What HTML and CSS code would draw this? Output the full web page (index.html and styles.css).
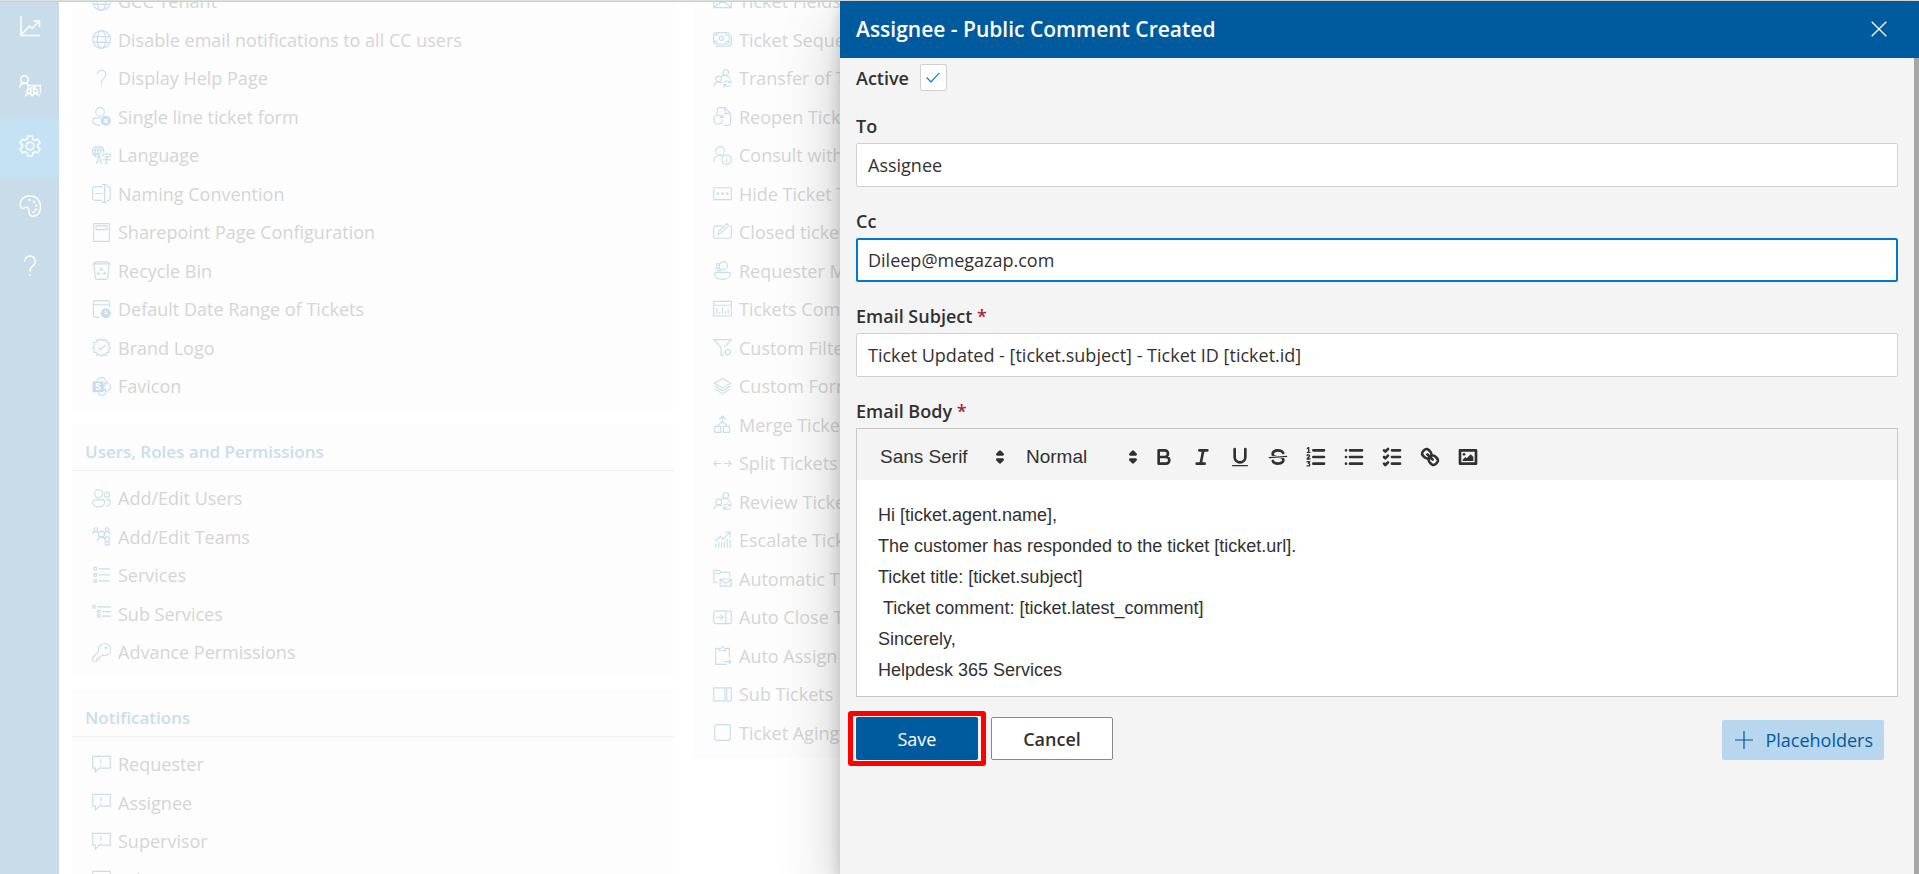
FILE: index.html
```html
<!DOCTYPE html>
<html lang="en">
<head>
<meta charset="utf-8">
<title>Helpdesk settings</title>
<link rel="stylesheet" href="styles.css">
</head>
<body>
<svg class="sprite" aria-hidden="true">
  <symbol id="globe" viewBox="0 0 20 20"><circle cx="10" cy="10" r="9.3"/><ellipse cx="10" cy="10" rx="4.4" ry="9.3"/><path d="M1.5 7h17M1.5 13h17"/></symbol>
  <symbol id="help" viewBox="0 0 20 20"><path d="M5.5 5.5a4.5 4.5 0 1 1 7.4 3.6C11 10.600 10 11.500 10 14.500M10 17v1.700"/></symbol>
  <symbol id="user-x" viewBox="0 0 20 20"><circle cx="8.500" cy="5.200" r="4.500"/><path d="M9 11.500H3.200C1.700 11.500.7 12.500.7 14c0 3.500 3.300 5.300 8 5.300"/><circle class="solid" cx="14.500" cy="14.500" r="5.300"/><path class="cut" d="m12.500 12.500 4 4m0-4-4 4"/></symbol>
  <symbol id="language" viewBox="0 0 20 20"><path d="M5 11.500A6 6 0 1 1 12.300 7M1 4.500h11M1 8h8M6.500 12V.5M4.500 11C3 8 3 4 4.800 1M8 1c1 1.500 1.500 3 1.500 6M4.500 19l3-8.500 3 8.500M5.500 16h4M15 7v1.500M11.500 11V8.700h8V11M13 11.500h4.500L15.500 13v5.500h-2M11 14.500h9"/></symbol>
  <symbol id="rename" viewBox="0 0 20 20"><path d="M11 2.700H3.500A2.800 2.800 0 0 0 .7 5.500v9a2.800 2.800 0 0 0 2.800 2.800H11M15.500 2.700h1a2.800 2.800 0 0 1 2.800 2.800v9a2.800 2.800 0 0 1-2.800 2.800h-1M10.500.7h5.500M10.500 19.300H16M13.300.7v18.600M3.500 10h7.500"/></symbol>
  <symbol id="page" viewBox="0 0 20 20"><path d="M1.700.7h16.600v18.600H1.700zM4.300 3h11.400v4H4.300z"/></symbol>
  <symbol id="bin" viewBox="0 0 20 20"><path d="M3.500.9h13L18.500 3H1.500zM2 3l1.500 14.500a2 2 0 0 0 2 1.800h9a2 2 0 0 0 2-1.800L18 3M8 10.500l2-3 2 3M13 11l1.200 2.500H11M6.800 11.500 5.800 13.500H9"/></symbol>
  <symbol id="date" viewBox="0 0 20 20"><path d="M7.500 18.300H4a2.500 2.500 0 0 1-2.500-2.500V3.200A2.500 2.500 0 0 1 4 .7h12a2.500 2.500 0 0 1 2.500 2.500V7.500M1.500 5h17"/><circle class="solid" cx="14.500" cy="14" r="5.300"/><path class="cut" d="M14.300 11v3.300h2.500"/></symbol>
  <symbol id="badge" viewBox="0 0 20 20"><path d="m10 .7 1.900 2 2.700-1 .7 2.700 2.900.6-.9 2.800 2 2.200-2 2.200.9 2.800-2.900.6-.7 2.700-2.700-1-1.900 2-1.900-2-2.700 1-.7-2.700-2.900-.6.9-2.800-2-2.200 2-2.200-.9-2.800 2.900-.6.7-2.700 2.700 1zM6.500 10l2.500 2.500 5-5"/></symbol>
  <symbol id="share" viewBox="0 0 20 20"><circle cx="10" cy="5.500" r="5"/><circle cx="15.300" cy="10.500" r="4.200"/><circle cx="10.700" cy="15.500" r="4"/><path class="solid" d="M.5 4.500h11.500v11.500H.5z"/><path class="cut" d="M8.500 7.800C7 6.800 4.300 7 4.300 8.500s4.200 1.200 4.200 3-2.700 2-4.400.8"/></symbol>
  <symbol id="users" viewBox="0 0 20 20"><circle cx="7" cy="5" r="4.200"/><circle cx="15.700" cy="6" r="2.700"/><path d="M2.500 11.500h9c1 0 1.800.8 1.800 1.800 0 3.300-2.500 5.500-6.300 5.500S.7 16.600.7 13.300c0-1 .8-1.800 1.800-1.800zM15 11.500h2.700c1 0 1.600.6 1.600 1.600 0 2.700-1.800 4.700-4.800 4.700"/></symbol>
  <symbol id="teams" viewBox="0 0 20 20"><circle cx="4" cy="2.800" r="2"/><circle cx="16" cy="2.800" r="2"/><circle cx="10" cy="7.500" r="3.200"/><circle cx="16" cy="13" r="2.600"/><path d="M.7 7.500C1 5.500 2.300 4.800 4 4.800s2.500.7 3 1.500M19.300 7.500c-.3-2-1.600-2.700-3.300-2.700s-2.500.7-3 1.500M5.500 15c.3-3 2-4.300 4.500-4.300 1.500 0 2.600.5 3.400 1.300M14 15v4.300l2-1.300 2 1.300V15"/></symbol>
  <symbol id="list" viewBox="0 0 20 20"><path d="M7 3h12M7 9.300h12M7 15.600h12M2 1.500h2.600v2.600H2zM2 8h2.600v2.600H2zM2 14.300h2.600v2.600H2z"/></symbol>
  <symbol id="sublist" viewBox="0 0 20 20"><path d="M5.500 3H20M10.500 8H20M10.500 12.700H20M.8 1.700h2.500v2.500H.8zM5.800 6.700h2.500v2.500H5.800zM5.800 11.500h2.500v2.500H5.800z"/></symbol>
  <symbol id="key" viewBox="0 0 20 20"><path d="M13 .8a6.200 6.200 0 0 0-6 8L.8 15v4.200H5V17h2.500v-2.500H9.500l1.500-2A6.200 6.200 0 1 0 13 .8z"/><circle cx="14.800" cy="5.200" r=".8"/></symbol>
  <symbol id="alert" viewBox="0 0 20 20"><path d="M.7 1.500h18.600v12.300H7.500L3.500 18v-4.200H.7zM9.300 4.200v5M9.300 10.800v1.200"/></symbol>
  <symbol id="fields" viewBox="0 0 20 20"><path d="M.7 3v13.500h18.600V3zM1 16 7.500 11h5l6.500 5"/></symbol>
  <symbol id="notes" viewBox="0 0 20 20"><rect x=".7" y="2.700" width="16.300" height="12" rx="2"/><circle cx="8.800" cy="8.700" r="2.200"/><path d="M3 17h13a3.300 3.300 0 0 0 3.300-3.300V5.500M4 3v2.500H1M13.700 3v2.500h3M4 14.500V12H1M13.700 14.500V12h3"/></symbol>
  <symbol id="transfer" viewBox="0 0 20 20"><circle cx="13.500" cy="3.800" r="3"/><circle cx="6" cy="10.500" r="3"/><path d="M8.500 8c2.500-2 7.500-2 9.500 2.500M1.300 18c.3-3 2-4.500 4.700-4.500 1.700 0 2.800.5 3.700 1.700M11.500 14.500c1.500-2.500 5-2.500 6.500-.3M18.800 11.500v3h-3M18.800 16.500c-1.500 2.500-5 2.500-6.500.3M11.500 19.500v-3h3"/></symbol>
  <symbol id="reopen" viewBox="0 0 20 20"><path d="M4.500 8V2.700a2 2 0 0 1 2-2h6L18.500 7v10.300a2 2 0 0 1-2 2H12M12.500.7V7h6M9.500 10.500A4.800 4.800 0 1 0 10.300 14M10.300 8v3.200H7"/></symbol>
  <symbol id="consult" viewBox="0 0 20 20"><circle cx="7.500" cy="5.200" r="4.500"/><path d="M.7 16.500c0-4.500 3-6.800 6.500-6.800 1.300 0 2 .1 3 .7"/><circle cx="14.300" cy="14.300" r="5"/><path d="M14.300 13.500v3.500M14.300 11.300v1"/></symbol>
  <symbol id="dots" viewBox="0 0 20 20"><path d="M.7 4h18.600v12.500H.7z"/><circle class="solid" cx="5" cy="10.200" r="1.400"/><circle class="solid" cx="10" cy="10.200" r="1.400"/><circle class="solid" cx="15" cy="10.200" r="1.400"/></symbol>
  <symbol id="edit" viewBox="0 0 20 20"><path d="M10 3.300H2.200C1.300 3.300.7 4 .7 4.800v9.700c0 .8.600 1.500 1.500 1.500h15.600c.9 0 1.500-.7 1.500-1.500V4.800c0-.8-.6-1.500-1.500-1.500M5 12l1-3 8.500-8.300 2 2L8 11z"/></symbol>
  <symbol id="requester" viewBox="0 0 20 20"><circle cx="11" cy="5" r="4.300"/><path d="M3.500 3h3v5h-3zM4.500 10.200h4M3.300 12h13.400c1 0 1.600.7 1.600 1.600 0 3.500-3.500 5.700-8.300 5.700s-8.300-2.200-8.300-5.700c0-.9.6-1.600 1.600-1.600z"/></symbol>
  <symbol id="chart" viewBox="0 0 20 20"><path d="M.7 1.500h18.600v15.300H.7zM.7 5.500h18.600M4 14.500V9M7 14.500v-2M10 14.500V8M13 14.500v-3M16 14.500V9.500"/></symbol>
  <symbol id="filter" viewBox="0 0 20 20"><path d="M8.500 18.500V10L.8 1.700h18.400L12 9.500M8.500 18.500h3"/><circle cx="15.500" cy="15" r="2.600"/><path d="M15.500 11v1.200M15.500 17.800V19M11.500 15h1.200M18.300 15h1.200M12.700 12.200l.9.900M17.400 16.900l.9.900M12.700 17.800l.9-.9M17.400 13.100l.9-.9"/></symbol>
  <symbol id="layers" viewBox="0 0 20 20"><path d="m10 1.500 8.500 5L10 11.500l-8.500-5zM1.500 9.500l8.500 5 8.500-5M1.500 12.500l8.500 5 8.500-5"/></symbol>
  <symbol id="merge" viewBox="0 0 20 20"><path d="M1.800 12h6.400v6.300H1.800zM11 12h6.400v6.300H11zM10 7V1M6.500 4.500 10 1l3.500 3.500M5 12c0-3 5-2.500 5-6 0 3.500 5 3 5 6"/></symbol>
  <symbol id="split" viewBox="0 0 20 20"><path d="M1 10h7.500M4 7l-3 3 3 3M11.500 10H19M16 7l3 3-3 3"/></symbol>
  <symbol id="escalate" viewBox="0 0 20 20"><path d="m2 10.500 6-5 2.500 3L18 1M12.500 1H18v6M3 17.500v-4M6 17.500v-6M9 17.500V12M12 17.500V11M15 17.500V9M18 17.500v-8"/></symbol>
  <symbol id="mail" viewBox="0 0 20 20"><path d="M5 14H.8V1.500h6L8.500 3.500h9V8M.8 5h6L8.500 3.500M7.500 10.500h11.800V18H7.500zM7.500 11l6 4 6-4"/></symbol>
  <symbol id="close-in" viewBox="0 0 20 20"><rect x=".7" y="3" width="18.600" height="13.500" rx="2.500"/><path d="M13.500 3v13.500M3 9.700h7.500M8 7l2.700 2.700L8 12.500"/></symbol>
  <symbol id="clipboard" viewBox="0 0 20 20"><path d="M6.500 2.500H2.800v16.800H14M17.200 12V2.500h-3.700M6.500 5h7V3L11.500 2.300a1.500 1.500 0 0 0-3 0L6.500 3zM11.500 16.500h7M16.500 14l2.500 2.500-2.500 2.500"/></symbol>
  <symbol id="columns" viewBox="0 0 20 20"><path d="M.7 3h11.800v13.700H.7zM14.500 3h4.800v13.700h-4.800z"/></symbol>
  <symbol id="square" viewBox="0 0 20 20"><rect x="1.700" y="1.700" width="16.600" height="16.600" rx="2.500"/></symbol>
</svg>

<nav class="rail" aria-label="Main">
  <a class="rail-item" href="#" aria-label="Reports"><svg viewBox="0 0 22 22"><path d="M2 1v19.500h19M3 19l7.500-8 2.500 2.500L20 6.500M14.500 6H20.500v6"/></svg></a>
  <a class="rail-item" href="#" aria-label="Teams"><svg viewBox="0 0 22 22"><circle cx="5.500" cy="4.500" r="3.800"/><path d="M.7 12.500C1 9.500 2.800 8.300 5.500 8.300c2 0 3.500.9 4.500 2.200M9 10.500h12.500V18.500M11 13h4.500v-3M16 9.500V12.500M9 10.500v4"/><circle cx="10" cy="16" r="2"/><circle cx="16.500" cy="16" r="2"/><path d="M6.500 21.500c.3-2 1.500-3 3.500-3s3 1 3.300 3c.3-2 1.200-3 3.200-3s3.200 1 3.500 3"/></svg></a>
  <a class="rail-item is-active" href="#" aria-label="Settings" aria-current="page"><svg viewBox="0 0 22 22"><path d="M8.800 1h4.400l.7 3.200 1.800 1 3.100-1 2.200 3.800-2.400 2.200v1.600l2.400 2.200-2.200 3.800-3.100-1-1.800 1-.7 3.200H8.800l-.7-3.200-1.800-1-3.100 1L1 14l2.400-2.200v-1.600L1 8l2.200-3.800 3.100 1 1.800-1z"/><circle cx="11" cy="11" r="3.800"/></svg></a>
  <a class="rail-item" href="#" aria-label="Theme"><svg viewBox="0 0 22 22"><path d="M2 12.500C-.5 8 3 1 10.500 1S21.500 6 21.500 12s-4 9.300-7.500 9.300c-3 0-4-2-4-4.500 0-3-.5-4.500-2.500-4.500-2 0-3.500 2.500-5.500.2z"/><circle class="dot" cx="10.500" cy="5" r="1.200"/><circle class="dot" cx="15" cy="6.800" r="1.200"/><circle class="dot" cx="17.200" cy="10.500" r="1.200"/><circle class="dot" cx="17" cy="14.500" r="1.200"/><circle class="dot" cx="14.500" cy="17" r="1.200"/></svg></a>
  <a class="rail-item" href="#" aria-label="Help"><svg viewBox="0 0 22 22"><path d="M5.700 6.500a5.300 5.300 0 1 1 8.600 4C12 12.300 11 13.300 11 16.500M11 19v2"/></svg></a>
</nav>

<main class="settings">
  <div class="column">
    <section class="card">
      <ul class="links">
        <li><a href="#"><svg><use href="#globe"/></svg>GCC Tenant</a></li>
        <li><a href="#"><svg><use href="#globe"/></svg>Disable email notifications to all CC users</a></li>
        <li><a href="#"><svg><use href="#help"/></svg>Display Help Page</a></li>
        <li><a href="#"><svg><use href="#user-x"/></svg>Single line ticket form</a></li>
        <li><a href="#"><svg><use href="#language"/></svg>Language</a></li>
        <li><a href="#"><svg><use href="#rename"/></svg>Naming Convention</a></li>
        <li><a href="#"><svg><use href="#page"/></svg>Sharepoint Page Configuration</a></li>
        <li><a href="#"><svg><use href="#bin"/></svg>Recycle Bin</a></li>
        <li><a href="#"><svg><use href="#date"/></svg>Default Date Range of Tickets</a></li>
        <li><a href="#"><svg><use href="#badge"/></svg>Brand Logo</a></li>
        <li><a href="#"><svg><use href="#share"/></svg>Favicon</a></li>
      </ul>
    </section>
    <section class="card">
      <h2 class="card-title">Users, Roles and Permissions</h2>
      <ul class="links">
        <li><a href="#"><svg><use href="#users"/></svg>Add/Edit Users</a></li>
        <li><a href="#"><svg><use href="#teams"/></svg>Add/Edit Teams</a></li>
        <li><a href="#"><svg><use href="#list"/></svg>Services</a></li>
        <li><a href="#"><svg><use href="#sublist"/></svg>Sub Services</a></li>
        <li><a href="#"><svg><use href="#key"/></svg>Advance Permissions</a></li>
      </ul>
    </section>
    <section class="card">
      <h2 class="card-title">Notifications</h2>
      <ul class="links">
        <li><a href="#"><svg><use href="#alert"/></svg>Requester</a></li>
        <li><a href="#"><svg><use href="#alert"/></svg>Assignee</a></li>
        <li><a href="#"><svg><use href="#alert"/></svg>Supervisor</a></li>
        <li><a href="#"><svg><use href="#alert"/></svg>Admin</a></li>
      </ul>
    </section>
  </div>
  <div class="column">
    <section class="card">
      <ul class="links">
        <li><a href="#"><svg><use href="#fields"/></svg>Ticket Fields</a></li>
        <li><a href="#"><svg><use href="#notes"/></svg>Ticket Sequence</a></li>
        <li><a href="#"><svg><use href="#transfer"/></svg>Transfer of Tickets</a></li>
        <li><a href="#"><svg><use href="#reopen"/></svg>Reopen Tickets</a></li>
        <li><a href="#"><svg><use href="#consult"/></svg>Consult with</a></li>
        <li><a href="#"><svg><use href="#dots"/></svg>Hide Ticket Type</a></li>
        <li><a href="#"><svg><use href="#edit"/></svg>Closed tickets</a></li>
        <li><a href="#"><svg><use href="#requester"/></svg>Requester Mode</a></li>
        <li><a href="#"><svg><use href="#chart"/></svg>Tickets Comments</a></li>
        <li><a href="#"><svg><use href="#filter"/></svg>Custom Filters</a></li>
        <li><a href="#"><svg><use href="#layers"/></svg>Custom Forms</a></li>
        <li><a href="#"><svg><use href="#merge"/></svg>Merge Tickets</a></li>
        <li><a href="#"><svg><use href="#split"/></svg>Split Tickets</a></li>
        <li><a href="#"><svg><use href="#transfer"/></svg>Review Tickets</a></li>
        <li><a href="#"><svg><use href="#escalate"/></svg>Escalate Tickets</a></li>
        <li><a href="#"><svg><use href="#mail"/></svg>Automatic Tickets</a></li>
        <li><a href="#"><svg><use href="#close-in"/></svg>Auto Close Tickets</a></li>
        <li><a href="#"><svg><use href="#clipboard"/></svg>Auto Assign</a></li>
        <li><a href="#"><svg><use href="#columns"/></svg>Sub Tickets</a></li>
        <li><a href="#"><svg><use href="#square"/></svg>Ticket Aging</a></li>
      </ul>
    </section>
  </div>
</main>

<section class="panel" role="dialog" aria-labelledby="panel-title">
  <header class="panel-head">
    <h1 id="panel-title">Assignee - Public Comment Created</h1>
    <button class="close" type="button" aria-label="Close"><svg viewBox="0 0 16 16"><path d="m.7.7 14.600 14.600M15.300.7.7 15.300"/></svg></button>
  </header>
  <form class="panel-body">
    <div class="active-row">
      <label for="active">Active</label>
      <span class="check">
        <input id="active" type="checkbox" checked>
        <svg viewBox="0 0 14 11"><path d="m.6 5.500 4.400 4.400L13.400.9"/></svg>
      </span>
    </div>
    <div class="field">
      <label for="to">To</label>
      <input id="to" type="text" value="Assignee">
    </div>
    <div class="field">
      <label for="cc">Cc</label>
      <input id="cc" class="is-focused" type="text" value="Dileep@megazap.com">
    </div>
    <div class="field">
      <label for="subject">Email Subject <span class="req">*</span></label>
      <input id="subject" type="text" value="Ticket Updated - [ticket.subject] - Ticket ID [ticket.id]">
    </div>
    <div class="field">
      <label for="body">Email Body <span class="req">*</span></label>
      <div class="editor">
        <div class="toolbar">
          <span class="picker picker-font">
            <select aria-label="Font"><option>Sans Serif</option></select>
            <svg viewBox="0 0 18 18"><path class="both" d="m7 11 2 2 2-2zM7 7l2-2 2 2z"/></svg>
          </span>
          <span class="picker picker-size">
            <select aria-label="Size"><option>Normal</option></select>
            <svg viewBox="0 0 18 18"><path class="both" d="m7 11 2 2 2-2zM7 7l2-2 2 2z"/></svg>
          </span>
          <div class="tools">
            <button type="button" aria-label="Bold"><svg viewBox="0 0 18 18"><path d="M5 4h4.500a2.500 2.500 0 0 1 0 5H5zM5 9h5.500a2.500 2.500 0 0 1 0 5H5z"/></svg></button>
            <button type="button" aria-label="Italic"><svg viewBox="0 0 18 18"><path d="M7 4h6M5 14h6M8 14l2-10"/></svg></button>
            <button type="button" aria-label="Underline"><svg viewBox="0 0 18 18"><path d="M5 3v6a4 4 0 0 0 8 0V3"/><rect class="fill" x="3" y="15" width="12" height="1" rx=".5"/></svg></button>
            <button type="button" aria-label="Strike"><svg viewBox="0 0 18 18"><path class="thin" d="m15.500 8.500-13 1"/><path class="fill" d="M9.007 8C6.542 7.791 6 7.519 6 6.500 6 5.792 7.283 5 9 5c1.571 0 2.765.679 2.969 1.309a1 1 0 0 0 1.900-.617C13.356 4.106 11.354 3 9 3 6.200 3 4 4.538 4 6.500a3.200 3.200 0 0 0 .5 1.843zM8.984 10C11.457 10.208 12 10.479 12 11.500c0 .708-1.283 1.500-3 1.500-1.571 0-2.765-.679-2.969-1.309a1 1 0 1 0-1.900.617C4.644 13.894 6.646 15 9 15c2.800 0 5-1.538 5-3.500a3.200 3.200 0 0 0-.5-1.843z"/></svg></button>
            <button type="button" aria-label="Numbered list"><svg viewBox="0 0 18 18"><path d="M7 4h8M7 9h8M7 14h8"/><path class="thin" d="M2.500 2.500l1-.5v3.500M2.500 5.500h2M2.300 8c.3-1 2-.8 1.900.2 0 .9-1.700 1.200-1.900 2.300h2.200M2.300 12.500h2l-1 1.300c1.400.1 1.400 1.900 0 1.900H2.300"/></svg></button>
            <button type="button" aria-label="Bulleted list"><svg viewBox="0 0 18 18"><path d="M6 4h9M6 9h9M6 14h9M3 4h0M3 9h0M3 14h0"/></svg></button>
            <button type="button" aria-label="Checklist"><svg viewBox="0 0 18 18"><path d="M9 4h6M9 9h6M9 14h6M3 4l1 1 2-2M3 9l1 1 2-2M3 14l1 1 2-2"/></svg></button>
            <button type="button" aria-label="Link"><svg viewBox="0 0 18 18"><path d="m7 7 4 4M8.900 4.577a3.476 3.476 0 0 1 .36 4.679A3.476 3.476 0 0 1 4.577 8.900C3.185 7.500 2.035 6.400 4.217 4.217S7.500 3.185 8.900 4.577zM13.423 9.100a3.476 3.476 0 0 0-4.679-.36 3.476 3.476 0 0 0 .36 4.679c1.392 1.392 2.500 2.542 4.679.36s1.032-3.279-.36-4.679z"/></svg></button>
            <button type="button" aria-label="Image"><svg viewBox="0 0 18 18"><path d="M3 4h12v10H3z"/><circle class="fill" cx="6" cy="7" r="1"/><path class="fill" d="M5 12v-1l2-2 1 1 3-3 2 2v3z"/></svg></button>
          </div>
        </div>
        <textarea id="body" rows="6">Hi [ticket.agent.name],
The customer has responded to the ticket [ticket.url].
Ticket title: [ticket.subject]
 Ticket comment: [ticket.latest_comment]
Sincerely,
Helpdesk 365 Services</textarea>
      </div>
    </div>
    <div class="actions">
      <span class="highlight"><button class="btn btn-primary" type="button">Save</button></span>
      <button class="btn btn-default" type="button">Cancel</button>
      <button class="placeholders" type="button"><svg viewBox="0 0 18 18"><path d="M9 0v18M0 9h18"/></svg>Placeholders</button>
    </div>
  </form>
</section>
</body>
</html>
```
FILE: styles.css
```css
* {
  box-sizing: border-box;
}

body {
  margin: 0;
  height: 100vh;
  display: flex;
  overflow: hidden;
  border-top: 1px solid #dde2dc;
  background: #fff;
  color: #323130;
  font: 18px/24px "Open Sans", "Noto Sans", sans-serif;
}

a {
  color: inherit;
  text-decoration: none;
}

button,
input,
select,
textarea {
  font: inherit;
  color: inherit;
  margin: 0;
}

button {
  padding: 0;
  border: 0;
  background: none;
}

svg {
  display: block;
  flex: none;
  fill: none;
  stroke: currentColor;
}

.sprite {
  position: absolute;
  width: 0;
  height: 0;
}

/* Left rail */
.rail {
  flex: none;
  width: 59px;
  border-top: 1px solid #c8c8fa;
  background: #c8dce9;
  color: #fff;
}

.rail-item {
  display: flex;
  justify-content: center;
  align-items: center;
  height: 60px;
  padding-bottom: 4px;
  border-radius: 4px;
}

.rail-item:first-child {
  margin-top: -4px;
}

.rail-item svg {
  width: 22px;
  height: 22px;
  stroke-width: 1.5;
}

.rail-item .dot {
  fill: #fff;
  stroke: none;
}

.is-active {
  background: #c5e1f4;
}

/* Settings cards */
.settings {
  flex: 1;
  display: grid;
  grid-template-columns: repeat(3, 1fr);
  gap: 19px;
  padding: 0 3px 0 13px;
  border-top: 1px solid #c8c8fa;
  overflow: hidden;
}

.column {
  display: flex;
  flex-direction: column;
  gap: 13px;
  margin-top: -20px;
}

.card {
  padding-bottom: 6px;
  background: #fdfdfd;
}

.card-title {
  margin: 0 0 8px;
  padding: 16px 13px 6px;
  border-bottom: 1px solid #f2f2f2;
  color: #c8dfee;
  font-size: 17px;
  font-weight: 600;
}

.links {
  margin: 0;
  padding: 0;
  list-style: none;
}

.links a {
  display: flex;
  align-items: center;
  gap: 7px;
  height: 38px;
  padding-left: 20px;
  color: #d5d5d5;
  white-space: nowrap;
}

.links li:nth-child(even) a {
  height: 39px;
}

.links svg {
  width: 19px;
  height: 19px;
  color: #c9deec;
  stroke-width: 1.2;
}

.solid {
  fill: #c9deec;
  stroke: none;
}

.cut {
  stroke: #fff;
  stroke-width: 1.4;
}

/* Side panel */
.panel {
  position: absolute;
  inset: 1px 0 0 840px;
  display: flex;
  flex-direction: column;
  background: #f4f4f4;
  box-shadow: 0 26px 58px rgba(0, 0, 0, 0.22), 0 5px 14px rgba(0, 0, 0, 0.18);
}

.panel-head {
  display: flex;
  justify-content: space-between;
  align-items: center;
  height: 57px;
  padding: 0 32px 2px 16px;
  background: #005a9e;
  color: #fff;
}

.panel-head h1 {
  margin: 0;
  font-size: 21px;
  font-weight: 600;
}

.close svg {
  width: 16px;
  height: 16px;
  stroke-width: 1.3;
}

.panel-body {
  flex: 1;
  padding: 6px 16px;
  border-right: 5px solid #a6a6a6;
}

.active-row {
  display: flex;
  align-items: center;
  gap: 11px;
  margin-bottom: 20px;
}

label {
  font-weight: 600;
}

.check {
  display: grid;
  place-items: center;
}

.check > * {
  grid-area: 1 / 1;
}

.check input {
  width: 27px;
  height: 27px;
  appearance: none;
  border: 1px solid #d0d0ce;
  border-radius: 2px;
  background: #fff;
}

.check svg {
  width: 14px;
  height: 11px;
  color: #0078d4;
  stroke-width: 1.2;
  pointer-events: none;
}

.field {
  margin-bottom: 19px;
}

.field label {
  display: block;
  padding-bottom: 2px;
  line-height: 30px;
}

.req {
  color: #a4262c;
}

.field input {
  display: block;
  width: 100%;
  height: 44px;
  padding: 0 11px;
  border: 1px solid #d0d0ce;
  border-radius: 2px;
  background: #fff;
}

.field input.is-focused {
  padding: 0 10px;
  border: 2px solid #0078d4;
}

.editor {
  border: 1px solid #c8c8c8;
  background: #fff;
  font-family: "Liberation Sans", Arial, sans-serif;
}

.toolbar {
  display: flex;
  align-items: center;
  height: 51px;
  padding: 4px 23px 0;
  background: #f4f4f4;
}

.picker {
  display: grid;
  align-items: center;
}

.picker > * {
  grid-area: 1 / 1;
}

.picker select {
  width: 100%;
  padding: 0;
  border: 0;
  appearance: none;
  background: none;
  font-size: 19px;
}

.picker svg {
  width: 24px;
  height: 24px;
  justify-self: end;
  pointer-events: none;
}

.picker-font {
  width: 132px;
  margin-right: 14px;
}

.picker-size {
  width: 119px;
  margin-right: 7px;
}

.toolbar svg {
  stroke-width: 2;
  stroke-linecap: round;
  stroke-linejoin: round;
}

.toolbar .both {
  fill: currentColor;
}

.toolbar .fill {
  fill: currentColor;
  stroke: none;
}

.toolbar .thin {
  stroke-width: 1;
}

.tools {
  display: flex;
  gap: 14px;
}

.tools svg {
  width: 24px;
  height: 24px;
}

.editor textarea {
  display: block;
  width: 100%;
  padding: 20px 21px 10px;
  border: 0;
  background: none;
  font-size: 18px;
  line-height: 31px;
  overflow: hidden;
  resize: none;
}

.actions {
  display: flex;
  align-items: flex-end;
  gap: 13px;
  padding-top: 1px;
}

.highlight {
  position: relative;
}

.highlight::after {
  content: "";
  position: absolute;
  inset: -6px -8px;
  border: 5px solid #f00;
  border-radius: 3px;
  pointer-events: none;
}

.btn {
  display: block;
  width: 122px;
  height: 43px;
  border-radius: 2px;
}

.btn-primary {
  background: #005a9e;
  color: #fff;
}

.btn-default {
  border: 1px solid #8a8886;
  background: #fff;
  font-weight: 600;
}

.placeholders {
  display: flex;
  align-items: center;
  gap: 12px;
  height: 40px;
  margin: 0 14px 0 auto;
  padding: 0 11px 0 13px;
  border-radius: 2px;
  background: #b8d6ee;
  color: #005a9e;
}

.placeholders svg {
  width: 18px;
  height: 18px;
  stroke-width: 1.2;
}
```
